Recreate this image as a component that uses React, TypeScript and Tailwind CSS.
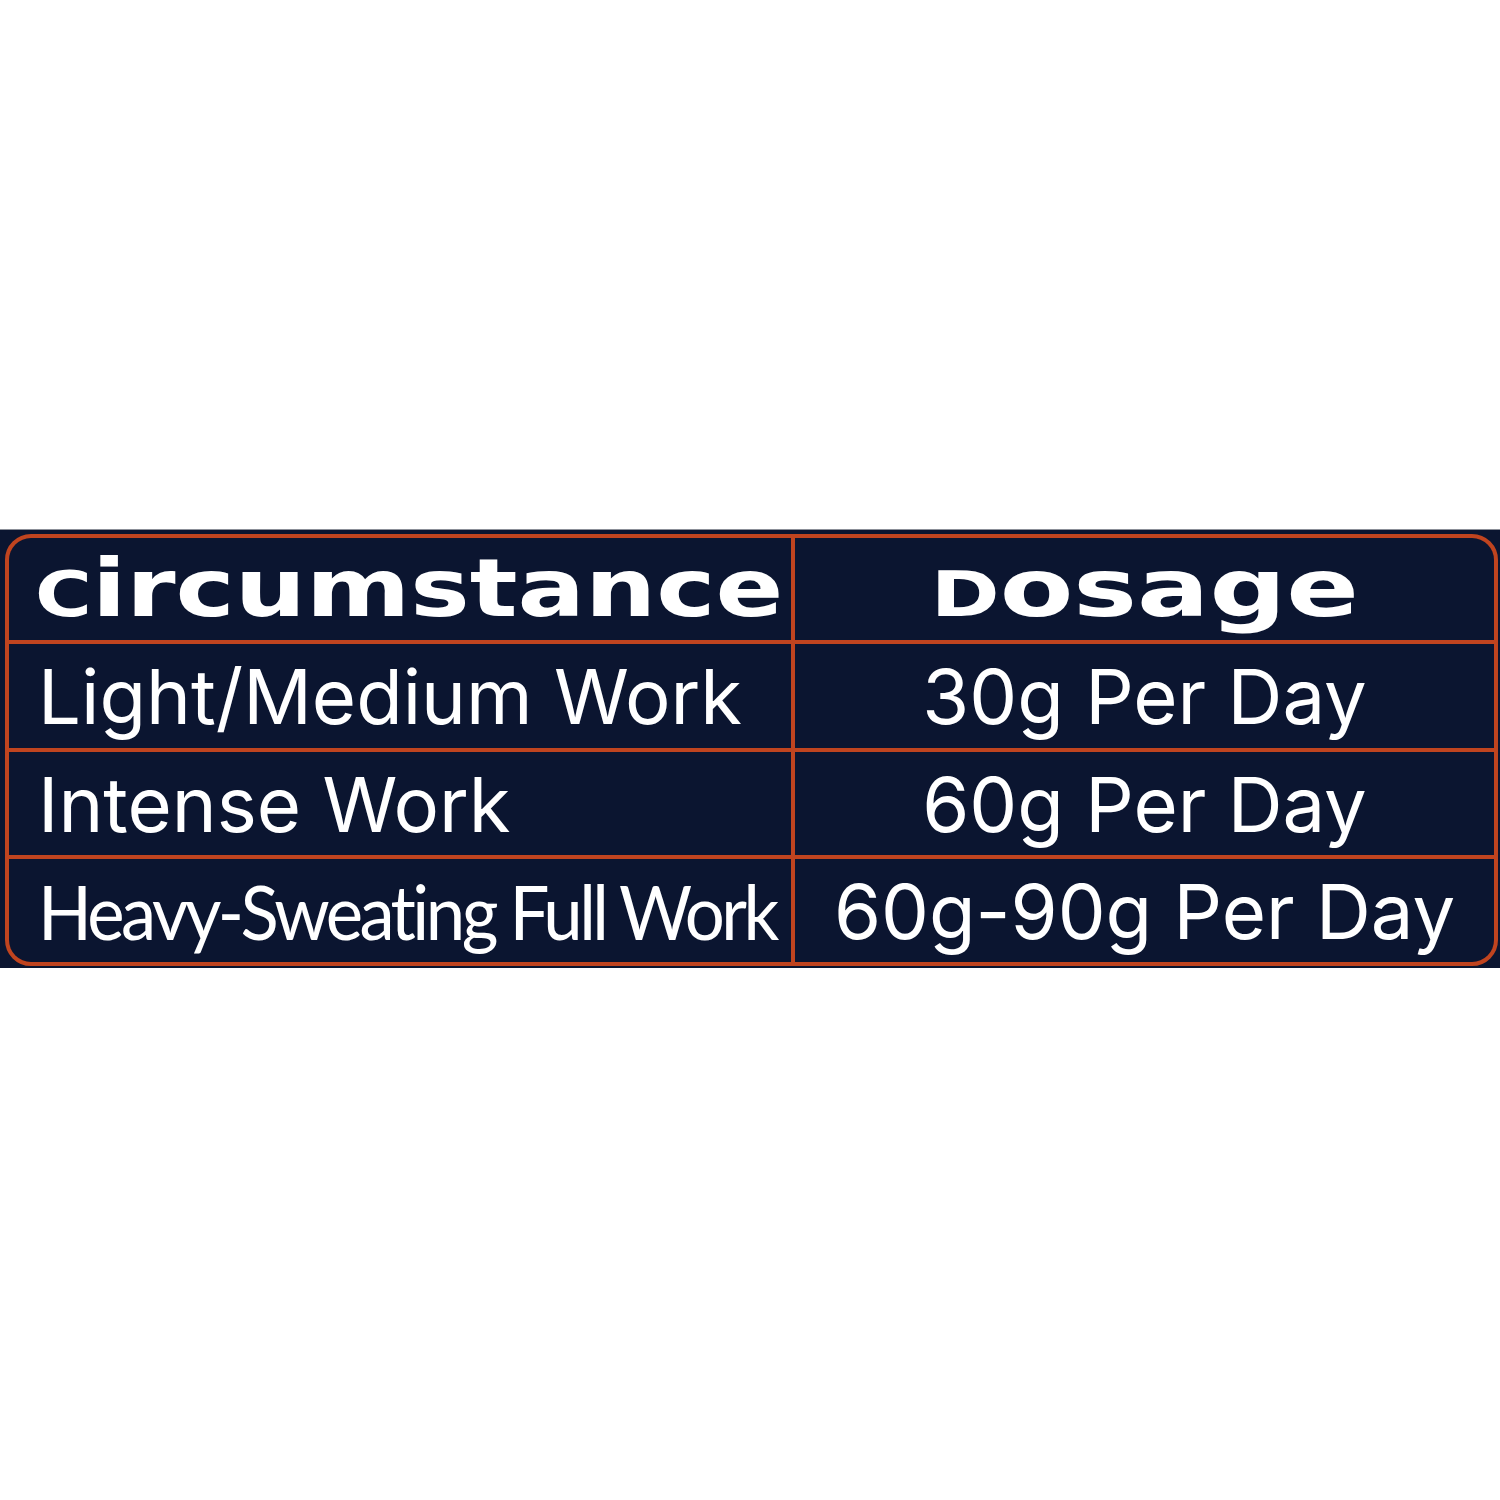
import React from "react";

const head = "font-['DejaVu_Sans',sans-serif] font-bold text-[80px] leading-none text-white inline-block whitespace-nowrap";
const body = "font-['Inter',sans-serif] font-normal text-[76px] leading-none text-white whitespace-nowrap";

export default function App() {
  return (
    <div className="w-[1500px] h-[1500px] bg-white pt-[529px]">
      <div className="border-t border-[#8b8f98] bg-[#0b1530] h-[439px] pl-[5px] pr-[2px] pt-[4px] pb-[2px]">
        <div className="rounded-[26px] border-[4px] border-[#c0441f] bg-[#c0441f] overflow-hidden grid grid-cols-[782px_699px] grid-rows-[102px_104px_103px_103px] gap-[4px]">
          <div className="bg-[#0b1530] flex items-center pl-[26px]">
            <span className={head + " origin-left scale-x-[1.25]"}>
              <span className="text-[62px]">C</span>ircumstance
            </span>
          </div>
          <div className="bg-[#0b1530] flex items-center justify-center">
            <span className={head + " scale-x-[1.34]"}>
              <span className="text-[62px]">D</span>osage
            </span>
          </div>

          <div className="bg-[#0b1530] flex items-center pl-[29px]">
            <span className={body}>Light/Medium Work</span>
          </div>
          <div className="bg-[#0b1530] flex items-center justify-center">
            <span className={body}>30g Per Day</span>
          </div>

          <div className="bg-[#0b1530] flex items-center pl-[29px]">
            <span className={body}>Intense Work</span>
          </div>
          <div className="bg-[#0b1530] flex items-center justify-center">
            <span className={body}>60g Per Day</span>
          </div>

          <div className="bg-[#0b1530] flex items-center pl-[29px]">
            <span className="font-['Lato',sans-serif] font-normal text-[76px] leading-none text-white whitespace-nowrap tracking-[-0.05em] inline-block origin-left scale-x-[0.93]">
              Heavy-Sweating Full Work
            </span>
          </div>
          <div className="bg-[#0b1530] flex items-center justify-center">
            <span className={body}>60g-90g Per Day</span>
          </div>
        </div>
      </div>
    </div>
  );
}
